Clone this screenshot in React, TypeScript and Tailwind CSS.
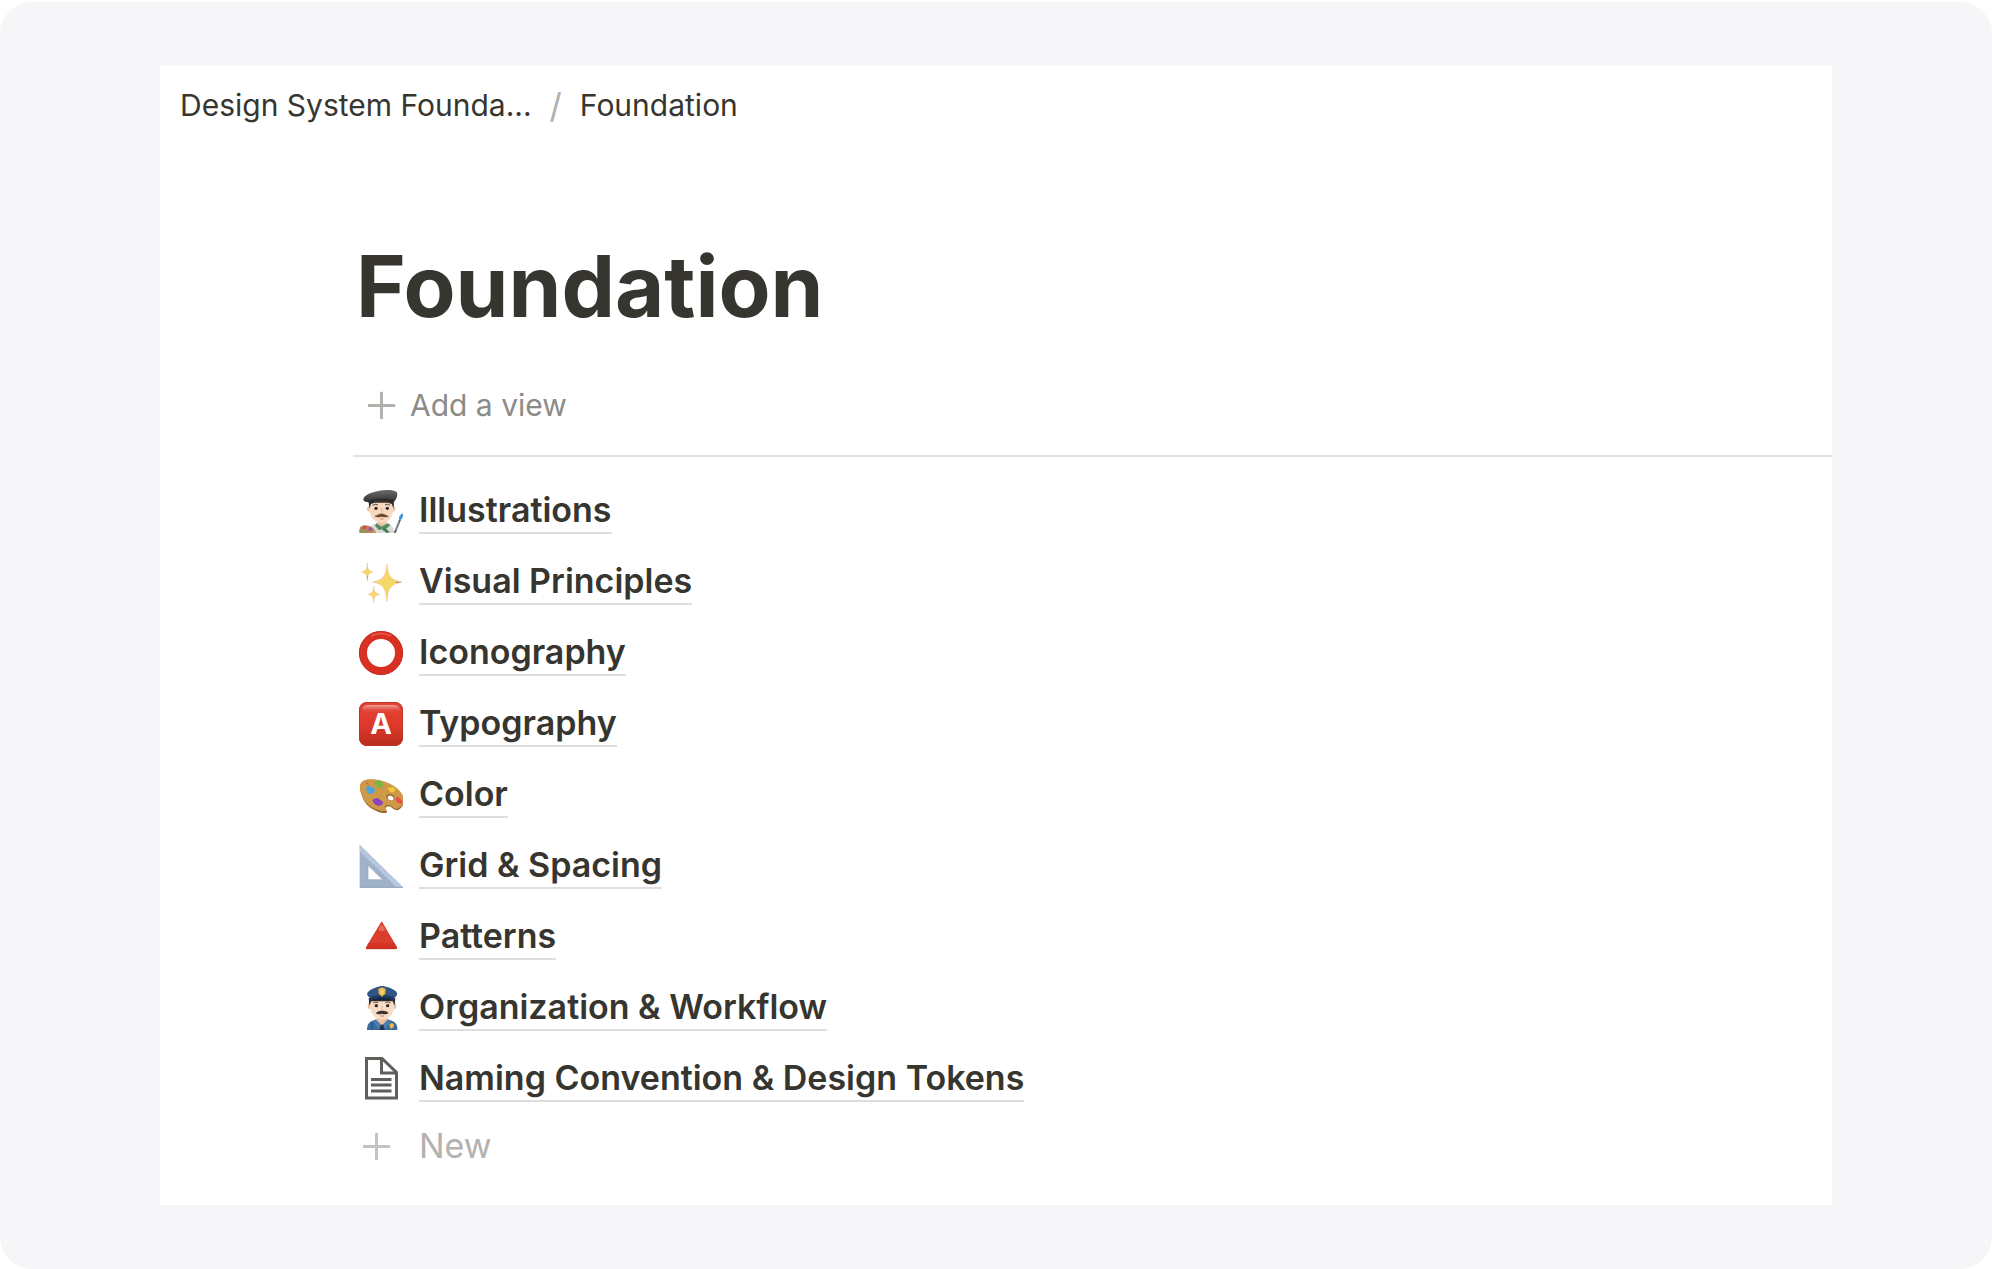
import type {ReactNode} from "react";

const ArtistIcon = () => (
    <svg viewBox="27 27 132 132" className="size-11 shrink-0" aria-hidden="true">
        <defs>
            <linearGradient id="beret" x1="0" y1="0" x2="0" y2="1">
                <stop offset="0" stopColor="#6b6b6b"/>
                <stop offset="1" stopColor="#303030"/>
            </linearGradient>
        </defs>
        <path d="M55 159c2-19 12-26 27-29l12 4 14-4c14 3 23 9 26 29z" fill="#d9d9d6"/>
        <path d="M81 118h29v14l-15 14-14-14z" fill="#ecc3a4"/>
        <path d="M79 130l16 10 18-10 8 5-13 12-8 5-4-5-9 4-12-14z" fill="#4f8a63"/>
        <path d="M97 147l10-1 12 10-9 3z" fill="#3b7650"/>
        <ellipse cx="56" cy="87" rx="5" ry="8" fill="#edc7aa"/>
        <ellipse cx="131" cy="87" rx="5" ry="8" fill="#edc7aa"/>
        <path d="M58 62h72v20c0 28-13 46-35 46S58 110 58 82z" fill="#f6d9c0"/>
        <path d="M55 58h77l-1 28-6-14-11-4H74l-11 4-5 14z" fill="#33302c"/>
        <path d="M68 76q8-6 16-1M105 75q8-5 15 1" fill="none" stroke="#5b4639" strokeWidth="3"/>
        <circle cx="78" cy="85" r="5" fill="#332a26"/>
        <circle cx="112" cy="85" r="5" fill="#332a26"/>
        <path d="M95 84v14" stroke="#e6bb9b" strokeWidth="4"/>
        <path d="M73 108q8-1 15-6 7-3 14 0 7 5 15 6-7 7-22 2-16 5-22-2z" fill="#6b4a32"/>
        <path d="M91 117h9" stroke="#c57d6d" strokeWidth="3"/>
        <path d="M40 58c2-12 20-20 44-25 24-5 46-4 55 2 6 6 2 19-5 28-19-5-48-5-74 4-13 0-21-3-20-9z" fill="url(#beret)"/>
        <path d="M56 65q36-14 77-2" fill="none" stroke="#252525" strokeWidth="4"/>
        <path d="M28 159c-2-13 4-23 16-23 17 0 30 9 34 23z" fill="#b5805f"/>
        <circle cx="44" cy="143" r="5" fill="#e34034"/>
        <circle cx="39" cy="154" r="5" fill="#50b648"/>
        <circle cx="61" cy="147" r="5" fill="#8850c4"/>
        <circle cx="71" cy="156" r="3" fill="#d7b140"/>
        <path d="M134 159l16-40" stroke="#5b6269" strokeWidth="6"/>
        <path d="M137 150l10-26" stroke="#b4bac0" strokeWidth="2"/>
        <path d="M147 117c-1-8 4-13 11-18 2 8 0 15-5 21z" fill="#4391d4"/>
    </svg>
);

const SparklesIcon = () => (
    <svg viewBox="27 28 132 132" className="size-11 shrink-0" aria-hidden="true">
        <g fill="#f6d868" stroke="#f2c49c" strokeWidth="2" strokeLinejoin="round">
            <path d="M111 40c3 34 9 48 45 54-36 6-42 21-45 59-4-38-9-53-43-59 34-6 39-20 43-54z"/>
            <path d="M52 37c1 18 4 24 17 27-13 3-16 9-17 26-1-17-4-23-17-26 13-3 16-9 17-27z"/>
            <path d="M71 107c1 15 4 21 18 24-14 3-17 9-18 25-1-16-4-22-17-25 13-3 16-9 17-24z"/>
        </g>
        <path d="M136 93l18 1-14 3z" fill="#b97842"/>
        <path d="M51 75h3l-1 15z" fill="#c58b4d"/>
    </svg>
);

const CircleIcon = () => (
    <svg viewBox="0 0 44 44" className="size-11 shrink-0" aria-hidden="true">
        <circle cx="22" cy="22" r="18" fill="none" stroke="#d93024" strokeWidth="8"/>
        <circle cx="22" cy="22" r="21.500" fill="none" stroke="#c72d21" strokeWidth="1"/>
        <path d="M12 5Q22 0 32 5" fill="none" stroke="#e65343" strokeWidth="2"/>
    </svg>
);

const LetterIcon = () => (
    <svg viewBox="0 0 44 44" className="size-11 shrink-0" aria-hidden="true">
        <defs>
            <linearGradient id="tile" x1="0" y1="0" x2="0" y2="1">
                <stop offset="0" stopColor="#e04537"/>
                <stop offset="0.5" stopColor="#df3a2b"/>
                <stop offset="1" stopColor="#b92d20"/>
            </linearGradient>
            <linearGradient id="shine" x1="0" y1="0" x2="0" y2="1">
                <stop offset="0" stopColor="#f0a59b"/>
                <stop offset="1" stopColor="#e04537" stopOpacity="0"/>
            </linearGradient>
        </defs>
        <rect width="44" height="44" rx="8" fill="url(#tile)"/>
        <rect x="0.5" y="0.5" width="43" height="43" rx="7.500" fill="none" stroke="#be3427"/>
        <path d="M3 9q0-6 6-6h26q6 0 6 6v2H3z" fill="url(#shine)"/>
        <text x="22" y="32" textAnchor="middle" fontFamily="Inter, sans-serif" fontSize="29" fontWeight="700" fill="#ffffff">A</text>
    </svg>
);

const PaletteIcon = () => (
    <svg viewBox="27 20 132 132" className="size-11 shrink-0" aria-hidden="true">
        <path d="M30 66c-3-16 9-26 32-26 39 0 88 24 97 52 5 17 0 31-13 38-8 4-16-1-22-7-7-5-17-4-17 4 1 6 7 8 2 12-11 5-36-5-53-19-14-12-23-32-26-54z" fill="#98672f"/>
        <path d="M30 61c0-14 12-22 32-22 40 0 87 22 96 49 5 17 1 31-12 38-8 4-16-1-22-7-7-5-20-4-19 4 1 6 7 8 2 10-11 4-34-4-51-17-15-13-26-36-26-55z" fill="#cf9a48"/>
        <ellipse cx="121" cy="93" rx="12" ry="9" transform="rotate(25 121 93)" fill="#8d6331"/>
        <ellipse cx="122" cy="95" rx="9" ry="7" transform="rotate(25 122 95)" fill="#ffffff"/>
        <path d="M76 45c7-7 16-4 22 3 5 7 0 16-7 17-9 0-12-6-15-10-3-3-2-7 0-10z" fill="#7cb542"/>
        <path d="M49 65c2-7 9-7 14-4 3 2 7 2 10 4 4 5 1 11-3 15-7 6-17 2-20-5-2-4-2-7-1-10z" fill="#4da4dc"/>
        <path d="M111 62l8 3c4-3 10-3 15 1 3 5 0 11-6 12-7 1-11-4-13-9z" fill="#f3ca3d"/>
        <path d="M67 101c6-4 14-8 20-4 2 4 8 4 12 9 1 6-5 12-13 12-9 0-16-8-19-17z" fill="#8b43bd"/>
        <path d="M136 96c4-6 8-4 12-2 7 4 11 11 9 18-8 2-15-3-19-8z" fill="#e5554b"/>
        <path d="M46 45l7 4 5 7-7-2z" fill="#d45c45"/>
    </svg>
);

const RulerIcon = () => (
    <svg viewBox="27 22 132 132" className="size-11 shrink-0" aria-hidden="true">
        <path fillRule="evenodd" d="M29 24l131 129H29zM54 89v40h45z" fill="#9fb2c8"/>
        <path d="M29 24l131 129-21-1L29 44z" fill="#b6c9de"/>
        <path fillRule="evenodd" d="M54 86v43h44z" fill="#ffffff" stroke="#8da3bb" strokeWidth="2"/>
        <path d="M39 43l-5 5m14 5l-5 5m14 4l-5 5m14 5l-5 5m14 5l-5 5m14 5l-5 5m14 5l-5 5m14 4l-5 5m14 5l-5 5m14 4l-5 5" stroke="#94abc4" strokeWidth="2"/>
        <path d="M30 152h128" stroke="#8299b3" strokeWidth="2"/>
    </svg>
);

const TriangleIcon = () => (
    <svg viewBox="27 25 132 132" className="size-11 shrink-0" aria-hidden="true">
        <path d="M95 48l44 75H50z" fill="#dc3e2d" stroke="#dc3e2d" strokeWidth="5" strokeLinejoin="round"/>
        <path d="M55 110h79l7 14q-1 3-5 3H52q-4 0-3-3z" fill="#d33324"/>
        <path d="M50 126h88" stroke="#bd3024" strokeWidth="3" strokeLinecap="round"/>
        <path d="M92 56h6l7 13q-1 5-10 5t-10-5z" fill="#e4695b"/>
    </svg>
);

const OfficerIcon = () => (
    <svg viewBox="27 28 132 132" className="size-11 shrink-0" aria-hidden="true">
        <path d="M51 160c0-19 8-28 27-31h37c19 4 28 12 27 31z" fill="#386ba0"/>
        <path d="M79 117h33v15l-16 18-17-18z" fill="#ecc2a2"/>
        <path d="M77 128l18 18-10 12-16-25zM114 128l-18 18 10 12 16-25z" fill="#487db2"/>
        <path d="M92 144h8l4 16H88z" fill="#24364e"/>
        <path d="M66 137v23M126 137v23" stroke="#274f7b" strokeWidth="3"/>
        <ellipse cx="58" cy="88" rx="5" ry="9" fill="#edc6a9"/>
        <ellipse cx="134" cy="88" rx="5" ry="9" fill="#edc6a9"/>
        <path d="M60 65h72v19c0 28-14 44-36 44S60 112 60 84z" fill="#f8dcc6"/>
        <path d="M56 64h80l-2 23-6-13H64l-6 13z" fill="#342c28"/>
        <path d="M70 79q8-5 15-1M106 78q8-5 15 1" fill="none" stroke="#66503e" strokeWidth="3"/>
        <circle cx="79" cy="87" r="5" fill="#2f2926"/>
        <circle cx="113" cy="87" r="5" fill="#2f2926"/>
        <path d="M96 87v12" stroke="#e8bfa1" strokeWidth="4"/>
        <path d="M77 109q7-6 15-7h9q9 1 15 7-8 6-20 2-12 4-19-2z" fill="#3a302a"/>
        <path d="M90 118h12" stroke="#c9816f" strokeWidth="3"/>
        <path d="M52 49c5-9 22-17 44-22 22 5 40 12 45 22 2 7-4 13-11 14H63c-8-1-13-7-11-14z" fill="#2f5685"/>
        <path d="M59 61c23-7 51-7 74 0l1 12c-24-6-52-6-76 0z" fill="#213b5d"/>
        <path d="M61 70q35-12 70 0-15 1-35 1t-35-1z" fill="#14263e"/>
        <path d="M96 32l11 5-1 14-10 9-10-9-1-14z" fill="#f1b942"/>
        <path d="M96 38l5 4-1 7-4 4-4-4-1-7z" fill="#f7d876"/>
        <path d="M119 142l6-3 7 3-1 9-6 6-6-6z" fill="#edba49"/>
    </svg>
);

const PageIcon = () => (
    <svg viewBox="0 0 44 44" className="size-11 shrink-0" fill="none" stroke="#5f5e5a" strokeWidth="3" aria-hidden="true">
        <path d="M7.500 1.500h15.500L37.500 15.500v25.500h-30z"/>
        <path d="M22.500 2v14H37M12 22.500h20.500M12 28h20.500M12 34h20.500"/>
    </svg>
);

const PlusIcon = () => (
    <svg viewBox="0 0 28 28" className="size-7 shrink-0" stroke="currentColor" strokeWidth="3" strokeLinecap="round" aria-hidden="true">
        <path d="M13.500 2v25M1 14.500h25"/>
    </svg>
);

const pages: { title: string; icon: ReactNode }[] = [
    {title: "Illustrations", icon: <ArtistIcon/>},
    {title: "Visual Principles", icon: <SparklesIcon/>},
    {title: "Iconography", icon: <CircleIcon/>},
    {title: "Typography", icon: <LetterIcon/>},
    {title: "Color", icon: <PaletteIcon/>},
    {title: "Grid & Spacing", icon: <RulerIcon/>},
    {title: "Patterns", icon: <TriangleIcon/>},
    {title: "Organization & Workflow", icon: <OfficerIcon/>},
    {title: "Naming Convention & Design Tokens", icon: <PageIcon/>},
];

const Breadcrumb = () => (
    <nav aria-label="Breadcrumb" className="flex h-[78px] items-center gap-[18px] px-5 text-[30px]">
        <a href="#">Design System Founda...</a>
        <span className="text-[34px] text-[#b0b0ae]">/</span>
        <a href="#" aria-current="page">Foundation</a>
    </nav>
);

const App = () => {
    return (
        <div className="min-h-screen bg-white pt-[2px] font-['Inter',sans-serif] text-[#37352f]">
            <div className="rounded-[32px] bg-[#f6f6f9] px-40 py-16">
                <main className="bg-white pb-7">
                    <Breadcrumb/>

                    <div className="pt-[91px] pl-[193px]">
                        <h1 className="pl-[3px] text-[85px] leading-[104px] font-bold">Foundation</h1>

                        {/* View bar */}
                        <div className="mt-4 flex h-[102px] items-center border-b-2 border-[#e2e2e0] pl-[15px]">
                            <button type="button" className="flex items-center gap-[14px] text-[30px] text-[#8c8b87]">
                                <span className="text-[#b2b1ae]"><PlusIcon/></span>
                                Add a view
                            </button>
                        </div>

                        {/* Page list */}
                        <ul className="pt-[18px] pl-[6px]">
                            {pages.map((page) => (
                                <li key={page.title} className="flex h-[71px] items-center gap-4">
                                    {page.icon}
                                    <a href="#" className="border-b-2 border-[#dededc] text-[34px] leading-[44px] font-semibold">
                                        {page.title}
                                    </a>
                                </li>
                            ))}
                        </ul>

                        <button type="button" className="flex h-[63px] items-center gap-7 pl-[10px] text-[34px] text-[#b3b2ae]">
                            <span className="text-[#c4c3c0]"><PlusIcon/></span>
                            New
                        </button>
                    </div>
                </main>
            </div>
        </div>
    );
};

export default App;
